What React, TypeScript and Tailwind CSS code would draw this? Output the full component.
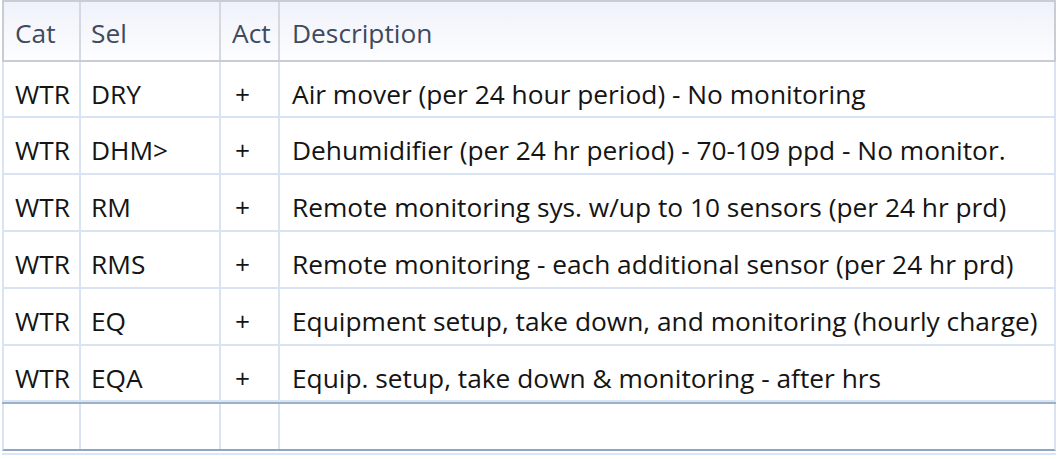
import React from "react";

const rows = [
  ["WTR", "DRY", "+", "Air mover (per 24 hour period) - No monitoring"],
  ["WTR", "DHM>", "+", "Dehumidifier (per 24 hr period) - 70-109 ppd - No monitor."],
  ["WTR", "RM", "+", "Remote monitoring sys. w/up to 10 sensors (per 24 hr prd)"],
  ["WTR", "RMS", "+", "Remote monitoring - each additional sensor (per 24 hr prd)"],
  ["WTR", "EQ", "+", "Equipment setup, take down, and monitoring (hourly charge)"],
  ["WTR", "EQA", "+", "Equip. setup, take down & monitoring - after hrs"],
];
const heights = [56, 57, 57, 57, 57, 56];

export default function App() {
  return (
    <div
      className="w-[1060px] h-[459px] bg-white overflow-hidden text-[26.3px] leading-none text-[#141414]"
      style={{ fontFamily: '"Open Sans", "Noto Sans", sans-serif' }}
    >
      <div className="ml-[2px] w-[1054px]">
        {/* header */}
        <div className="flex h-[62px] border-t-2 border-b-2 border-l-2 border-r-2 border-[#c8ccd4] bg-gradient-to-b from-[#eff2fa] to-[#fdfdff] text-[#3e4a5e]">
          <div className="w-[77px] shrink-0 border-r-2 border-[#d4d8e0] flex items-center pl-[11px] pt-[4px]">Cat</div>
          <div className="w-[140px] shrink-0 border-r-2 border-[#d4d8e0] flex items-center pl-[10px] pt-[4px]">Sel</div>
          <div className="w-[59px] shrink-0 border-r-2 border-[#d4d8e0] flex items-center pl-[11px] pt-[4px]">Act</div>
          <div className="flex-1 flex items-center pl-[12px] pt-[4px]">Description</div>
        </div>
        {rows.map((r, i) => (
          <div
            key={i}
            className="flex border-l-2 border-r-2 border-b-2 border-[#d9e4f3]"
            style={{ height: heights[i] }}
          >
            <div className="w-[77px] shrink-0 border-r-2 border-[#d9e4f3] flex items-center pl-[11px] pt-[10px]">{r[0]}</div>
            <div className="w-[140px] shrink-0 border-r-2 border-[#d9e4f3] flex items-center pl-[10px] pt-[10px]">{r[1]}</div>
            <div className="w-[59px] shrink-0 border-r-2 border-[#d9e4f3] flex items-center pl-[14px] pt-[10px]">{r[2]}</div>
            <div className="flex-1 flex items-center pl-[12px] pt-[10px] whitespace-nowrap">{r[3]}</div>
          </div>
        ))}
        <div className="h-[2px] bg-[#9bb0cc]" />
        <div className="flex h-[47px] border-l-2 border-r-2 border-b-2 border-[#d9e4f3] border-b-[#8ea5c4]">
          <div className="w-[77px] shrink-0 border-r-2 border-[#d9e4f3]" />
          <div className="w-[140px] shrink-0 border-r-2 border-[#d9e4f3]" />
          <div className="w-[59px] shrink-0 border-r-2 border-[#d9e4f3]" />
          <div className="flex-1" />
        </div>
        <div className="h-[2px] mt-[2px] bg-[#dce5f2]" />
      </div>
    </div>
  );
}
